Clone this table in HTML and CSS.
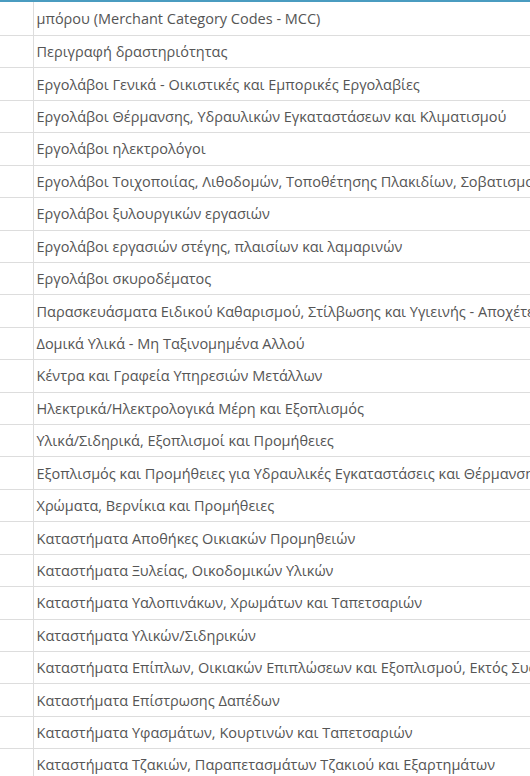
FILE: index.html
```html
<!DOCTYPE html>
<html>
<head>
<meta charset="utf-8">
<link rel="stylesheet" href="styles.css">
</head>
<body>
<div class="wrap">
<table class="grid">
<tbody>
<tr class="first"><td class="c0"></td><td class="c1">μπόρου (Merchant Category Codes - MCC)</td></tr>
<tr><td class="c0"></td><td class="c1">Περιγραφή δραστηριότητας</td></tr>
<tr><td class="c0"></td><td class="c1">Εργολάβοι Γενικά - Οικιστικές και Εμπορικές Εργολαβίες</td></tr>
<tr><td class="c0"></td><td class="c1">Εργολάβοι Θέρμανσης, Υδραυλικών Εγκαταστάσεων και Κλιματισμού</td></tr>
<tr><td class="c0"></td><td class="c1">Εργολάβοι ηλεκτρολόγοι</td></tr>
<tr><td class="c0"></td><td class="c1">Εργολάβοι Τοιχοποιίας, Λιθοδομών, Τοποθέτησης Πλακιδίων, Σοβατισμού και Μόνωσης</td></tr>
<tr><td class="c0"></td><td class="c1">Εργολάβοι ξυλουργικών εργασιών</td></tr>
<tr><td class="c0"></td><td class="c1">Εργολάβοι εργασιών στέγης, πλαισίων και λαμαρινών</td></tr>
<tr><td class="c0"></td><td class="c1">Εργολάβοι σκυροδέματος</td></tr>
<tr><td class="c0"></td><td class="c1">Παρασκευάσματα Ειδικού Καθαρισμού, Στίλβωσης και Υγιεινής - Αποχέτευσης</td></tr>
<tr><td class="c0"></td><td class="c1">Δομικά Υλικά - Μη Ταξινομημένα Αλλού</td></tr>
<tr><td class="c0"></td><td class="c1">Κέντρα και Γραφεία Υπηρεσιών Μετάλλων</td></tr>
<tr><td class="c0"></td><td class="c1">Ηλεκτρικά/Ηλεκτρολογικά Μέρη και Εξοπλισμός</td></tr>
<tr><td class="c0"></td><td class="c1">Υλικά/Σιδηρικά, Εξοπλισμοί και Προμήθειες</td></tr>
<tr><td class="c0"></td><td class="c1">Εξοπλισμός και Προμήθειες για Υδραυλικές Εγκαταστάσεις και Θέρμανση</td></tr>
<tr><td class="c0"></td><td class="c1">Χρώματα, Βερνίκια και Προμήθειες</td></tr>
<tr><td class="c0"></td><td class="c1">Καταστήματα Αποθήκες Οικιακών Προμηθειών</td></tr>
<tr><td class="c0"></td><td class="c1">Καταστήματα Ξυλείας, Οικοδομικών Υλικών</td></tr>
<tr><td class="c0"></td><td class="c1">Καταστήματα Υαλοπινάκων, Χρωμάτων και Ταπετσαριών</td></tr>
<tr><td class="c0"></td><td class="c1">Καταστήματα Υλικών/Σιδηρικών</td></tr>
<tr><td class="c0"></td><td class="c1">Καταστήματα Επίπλων, Οικιακών Επιπλώσεων και Εξοπλισμού, Εκτός Συσκευών</td></tr>
<tr><td class="c0"></td><td class="c1">Καταστήματα Επίστρωσης Δαπέδων</td></tr>
<tr><td class="c0"></td><td class="c1">Καταστήματα Υφασμάτων, Κουρτινών και Ταπετσαριών</td></tr>
<tr><td class="c0"></td><td class="c1">Καταστήματα Τζακιών, Παραπετασμάτων Τζακιού και Εξαρτημάτων</td></tr>
</tbody>
</table>
</div>
</body>
</html>
```

FILE: styles.css
```css
html, body {
  margin: 0;
  padding: 0;
  background: #fff;
  overflow: hidden;
}
.wrap {
  width: 530px;
  height: 776px;
  overflow: hidden;
  border-top: 2px solid #4a9cc0;
  box-sizing: border-box;
}
.grid {
  border-collapse: collapse;
  width: 1000px;
  font-family: "Open Sans", sans-serif;
  font-size: 14.5px;
  color: #555;
  table-layout: fixed;
}
.grid td {
  border-top: 1px solid #ddd;
  border-bottom: 1px solid #ddd;
  height: 32.43px;
  padding: 0 3px;
  white-space: nowrap;
  box-sizing: border-box;
  vertical-align: middle;
}
.grid .c0 {
  width: 33px;
  border-right: 1px solid #ddd;
}
.grid tr.first td {
  border-top: 0;
  height: 33.5px;
}
```
